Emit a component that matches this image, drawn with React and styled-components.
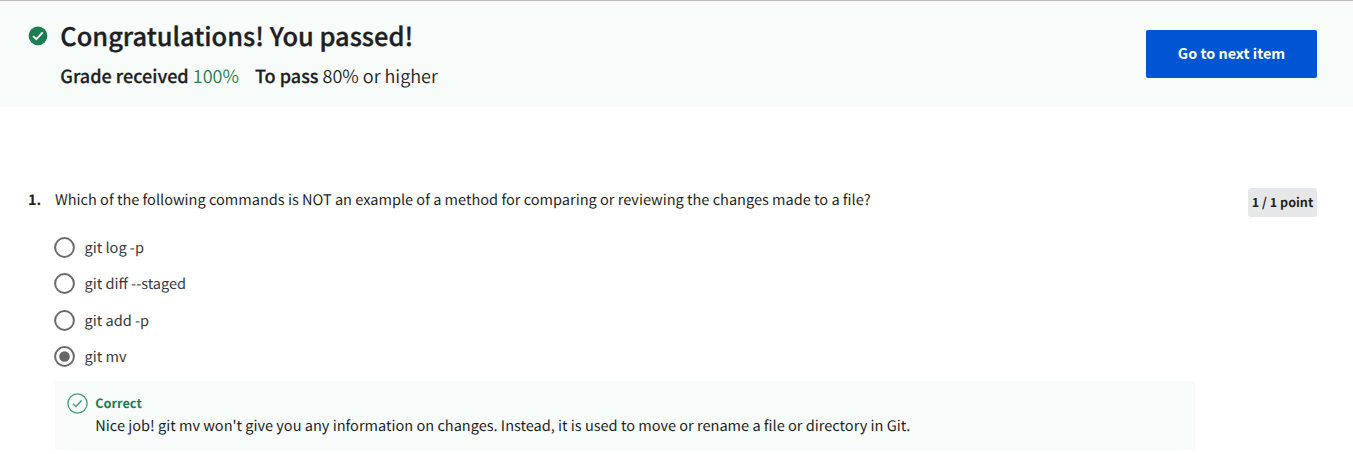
import React from "react";
import styled, { createGlobalStyle } from "styled-components";

const GlobalStyle = createGlobalStyle`
  * { box-sizing: border-box; }
  body {
    margin: 0;
    background: #fff;
    color: #1f1f1f;
    font-family: "Noto Sans CJK SC", "Source Sans Pro", sans-serif;
    font-size: 14.55px;
    overflow: hidden;
    text-rendering: geometricPrecision;
  }
`;

const Banner = styled.header`
  display: flex;
  justify-content: space-between;
  align-items: flex-start;
  height: 107px;
  padding: 18px 36px 0 28px;
  border-top: 1px solid #b9b9b9;
  background: #f7fbf9;
`;

const Result = styled.div`
  display: flex;
  gap: 12.3px;
`;

const PassedIcon = styled.svg`
  width: 20px;
  height: 20px;
  margin-top: 7px;
  flex: none;
`;

const Title = styled.h1`
  margin: 0;
  font-size: 25.4px;
  line-height: 34px;
  font-weight: 500;
  -webkit-text-stroke: 0.35px currentColor;
  white-space: nowrap;
`;

const Grades = styled.div`
  display: flex;
  gap: 16px;
  margin-top: 10px;
  font-size: 18.05px;
  line-height: 26px;
  font-weight: 350;
  white-space: nowrap;
`;

const GradeLabel = styled.span`
  font-weight: 500;
  -webkit-text-stroke: 0.25px currentColor;
`;

const Score = styled.span`
  color: #1d7c50;
`;

const NextButton = styled.button`
  width: 171px;
  height: 48px;
  margin-top: 11px;
  padding: 0 0 2px;
  border: 0;
  border-radius: 2px;
  background: #0056d2;
  color: #fff;
  font: 700 14.4px/24px "Noto Sans CJK SC", sans-serif;
`;

const Question = styled.main`
  display: flex;
  align-items: flex-start;
  padding: 81px 36px 0 28px;
`;

const QuestionNumber = styled.div`
  flex: none;
  width: 27px;
  line-height: 24px;
  font-weight: 700;
`;

const QuestionBody = styled.div`
  width: 1140px;
`;

const Prompt = styled.div`
  line-height: 24px;
  white-space: nowrap;
`;

const Points = styled.div`
  width: 69px;
  height: 29px;
  margin-left: auto;
  border-radius: 3px;
  background: #e5e7e8;
  font-size: 12.6px;
  line-height: 28px;
  font-weight: 700;
  text-align: center;
  white-space: nowrap;
`;

const Options = styled.div`
  display: flex;
  flex-direction: column;
  margin-top: 17px;
  margin-left: -1px;
`;

const Option = styled.label`
  display: flex;
  align-items: center;
  gap: 9.5px;
  height: 36.5px;
  color: #373a3c;
  line-height: 25px;
`;

const Radio = styled.svg`
  width: 21px;
  height: 21px;
  flex: none;
`;

const Feedback = styled.section`
  display: flex;
  gap: 7.3px;
  height: 69px;
  margin-top: 6px;
  padding: 12px 0 0 12px;
  background: #f7fbfa;
`;

const CorrectIcon = styled.svg`
  width: 21px;
  height: 21px;
  flex: none;
`;

const Verdict = styled.div`
  color: #1d7c50;
  font-size: 12.7px;
  line-height: 20px;
  font-weight: 700;
`;

const Explanation = styled.div`
  margin-top: 1px;
  line-height: 24px;
  white-space: nowrap;
`;

const options = [
  { label: "git log -p" },
  { label: "git diff --staged" },
  { label: "git add -p" },
  { label: "git mv", selected: true },
];

export default function App() {
  return (
    <>
      <GlobalStyle />
      <Banner>
        <Result>
          <PassedIcon viewBox="0 0 20 20">
            <circle cx="10" cy="9.8" r="9.4" fill="#1d7c50" />
            <path d="M5 10.1 8.4 13.2 14.7 6.4" fill="none" stroke="#fff" strokeWidth="1.9" />
          </PassedIcon>
          <div>
            <Title>Congratulations! You passed!</Title>
            <Grades>
              <span><GradeLabel>Grade received</GradeLabel> <Score>100%</Score></span>
              <span><GradeLabel>To pass</GradeLabel> 80% or higher</span>
            </Grades>
          </div>
        </Result>
        <NextButton>Go to next item</NextButton>
      </Banner>
      <Question>
        <QuestionNumber>1.</QuestionNumber>
        <QuestionBody>
          <Prompt>Which of the following commands is NOT an example of a method for comparing or reviewing the changes made to a file?</Prompt>
          <Options>
            {options.map(({ label, selected }) => (
              <Option key={label}>
                <Radio viewBox="0 0 21 21">
                  <circle cx="10.5" cy="10.5" r="9.4" fill="#fff" stroke="#6b6b6b" strokeWidth="2" />
                  {selected && <circle cx="10.5" cy="10.5" r="5.3" fill="#666" />}
                </Radio>
                <span>{label}</span>
              </Option>
            ))}
          </Options>
          <Feedback>
            <CorrectIcon viewBox="0 0 21 21" fill="none" stroke="#4b9b78">
              <circle cx="10.5" cy="10.5" r="9.6" strokeWidth="1.3" />
              <path d="M6 10.8 9 13.5 14.5 7.5" strokeWidth="1.5" />
            </CorrectIcon>
            <div>
              <Verdict>Correct</Verdict>
              <Explanation>Nice job! git mv won't give you any information on changes. Instead, it is used to move or rename a file or directory in Git.</Explanation>
            </div>
          </Feedback>
        </QuestionBody>
        <Points>1 / 1 point</Points>
      </Question>
    </>
  );
}
